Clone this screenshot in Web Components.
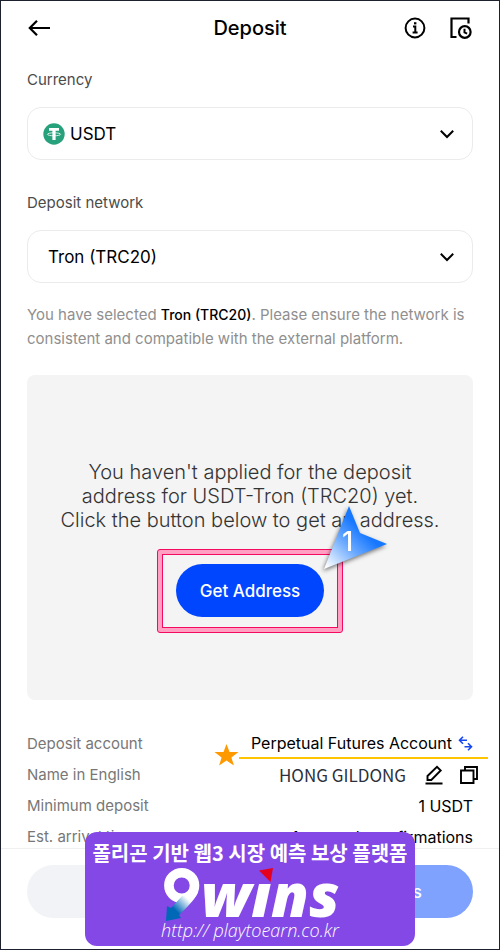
<!DOCTYPE html>
<html lang="en">
<head>
<meta charset="utf-8">
<meta name="viewport" content="width=device-width, initial-scale=1">
<title>Deposit</title>
<style>
body {
  margin: 0;
  font-family: Inter, "Noto Sans CJK KR", sans-serif;
  color: #000;
  background: #fff;
}
</style>
</head>
<body>
<deposit-page>
  <top-bar slot="header">Deposit</top-bar>
  <pick-field label="Currency" value="USDT" coin></pick-field>
  <pick-field label="Deposit network" value="Tron (TRC20)"></pick-field>
  <network-note>You have selected <b>Tron (TRC20)</b>. Please ensure the network is consistent and compatible with the external platform.</network-note>
  <address-panel>
    You haven't applied for the deposit<br>address for USDT-Tron (TRC20) yet.<br>Click the button below to get an address.
    <mark-box slot="action" step="1"><pill-button>Get Address</pill-button></mark-box>
  </address-panel>
  <deposit-details></deposit-details>
  <bottom-bar slot="footer">
    <pill-button kind="muted">Save Picture</pill-button>
    <pill-button kind="light">Copy Address</pill-button>
    <promo-banner slot="promo"></promo-banner>
  </bottom-bar>
</deposit-page>

<script>
// small helper: every component sets its own styles + markup
class BaseElement extends HTMLElement {
  constructor() {
    super();
    this.attachShadow({ mode: "open" });
  }
  connectedCallback() {
    this.shadowRoot.innerHTML = `<style>* { box-sizing: border-box; }${this.style_()}</style>${this.template()}`;
  }
}

class DepositPage extends BaseElement {
  style_() {
    return `
    :host {
      box-sizing: border-box;
      display: flex;
      flex-direction: column;
      height: 100vh;
      border: 1px solid #1d212e;
      background: #fff;
    }
    main {
      flex: 1;
      min-height: 0;
      overflow: hidden;
      padding: 0 26px;
    }`;
  }
  template() {
    return `<slot name="header"></slot><main><slot></slot></main><slot name="footer"></slot>`;
  }
}

class TopBar extends BaseElement {
  style_() {
    return `
    header {
      display: grid;
      grid-template-columns: 1fr auto 1fr;
      align-items: center;
      height: 53px;
      padding: 0 26px;
    }
    h1 { margin: 0; font-size: 20px; line-height: 24px; font-weight: 500; }
    .actions { display: flex; justify-content: flex-end; gap: 22px; }
    button { display: block; width: 24px; height: 24px; padding: 0; border: 0; background: none; color: #000; }
    svg { display: block; }`;
  }
  template() {
    return `
    <header>
      <button aria-label="Back">
        <svg width="24" height="24" viewBox="0 0 24 24" fill="none" stroke="currentColor" stroke-width="2.2"><path d="M23 12H3M10 4.8L2.8 12l7.2 7.2"/></svg>
      </button>
      <h1><slot></slot></h1>
      <div class="actions">
        <button aria-label="Info">
          <svg width="24" height="24" viewBox="0 0 24 24" fill="none" stroke="currentColor" stroke-width="2"><circle cx="12" cy="12" r="9.4"/><path d="M10 10.4h2.3v6M9.6 16.6h5"/><path d="M11 7.3h2.4" stroke-width="2.2"/></svg>
        </button>
        <button aria-label="History">
          <svg width="24" height="24" viewBox="0 0 24 24" fill="none" stroke="currentColor" stroke-width="2.2"><path d="M19.5 7.5V2.5H2.500v18.500H7.500"/><circle cx="15.800" cy="16" r="5.800"/><path d="M15.500 12.800v3.600l2.600 1.200" stroke-width="2"/></svg>
        </button>
      </div>
    </header>`;
  }
}

class PickField extends BaseElement {
  style_() {
    return `
    :host { display: block; padding-top: 16px; }
    :host + :host { padding-top: 0; }
    label { display: block; font-size: 15px; line-height: 20px; color: #4b4b4b; }
    .box { display: grid; align-items: center; margin: 17px 0; }
    .box > * { grid-area: 1 / 1; }
    select {
      appearance: none;
      width: 100%;
      height: 53px;
      padding: 0 48px 0 20px;
      border: 1px solid #ebebeb;
      border-radius: 14px;
      background: #fff;
      color: #000;
      font: inherit;
      font-size: 17px;
    }
    :host([coin]) select { padding-left: 42px; }
    svg { display: block; pointer-events: none; }
    .coin { margin-left: 16px; }
    .chevron { justify-self: end; margin-right: 18px; }`;
  }
  template() {
    const coin = this.hasAttribute("coin") ? `
      <svg class="coin" width="22" height="22" viewBox="0 0 22 22"><circle cx="11" cy="11" r="10.7" fill="#26a17b"/><path d="M6 5h10v2.800h-3.400V17H9.400V7.800H6z" fill="#fff"/><ellipse cx="11" cy="11.300" rx="6.600" ry="1.500" fill="none" stroke="#fff" stroke-width=".8"/></svg>` : "";
    return `
    <label for="pick">${this.getAttribute("label")}</label>
    <div class="box">
      <select id="pick"><option>${this.getAttribute("value")}</option></select>${coin}
      <svg class="chevron" width="16" height="16" viewBox="0 0 16 16" fill="none" stroke="#000" stroke-width="2"><path d="M1.800 4.800L8 11l6.200-6.200"/></svg>
    </div>`;
  }
}

class NetworkNote extends BaseElement {
  style_() {
    return `
    :host { display: block; margin-top: 20px; }
    p { margin: 0; font-size: 15px; line-height: 24px; color: #8f8f8f; }
    ::slotted(b) { color: #000; font-weight: 500; font-size: 14px; }`;
  }
  template() {
    return `<p><slot></slot></p>`;
  }
}

class AddressPanel extends BaseElement {
  style_() {
    return `
    :host {
      display: flex;
      flex-direction: column;
      align-items: center;
      margin-top: 24px;
      padding: 85px 16px 67px;
      border-radius: 8px;
      background: #f4f4f4;
    }
    p { margin: 0 0 17px; text-align: center; font-size: 20px; font-weight: 300; line-height: 24px; color: #333; }`;
  }
  template() {
    return `<p><slot></slot></p><slot name="action"></slot>`;
  }
}

class PillButton extends BaseElement {
  style_() {
    return `
    :host { display: block; }
    button {
      display: block;
      width: 100%;
      height: 53px;
      padding: 0 24px;
      border: 0;
      border-radius: 27px;
      background: #0046ff;
      color: #fff;
      font: inherit;
      font-size: 17px;
      font-weight: 500;
    }
    :host([kind=muted]) button { background: #f2f3f6; color: #c2c4c9; }
    :host([kind=light]) button { background: #80a2ff; }`;
  }
  template() {
    return `<button><slot></slot></button>`;
  }
}

// double pink outline with a numbered pointer on its corner
class MarkBox extends BaseElement {
  style_() {
    return `
    :host {
      display: block;
      position: relative;
      padding: 4px;
      border: 1px solid #f50a62;
      border-radius: 3px;
      background: #ff9fc2;
    }
    .inner { padding: 9px 13px 10px; border: 1px solid #f50a62; background: #f4f4f4; }
    svg { position: absolute; right: -48px; top: -47px; filter: drop-shadow(-1px 2px 2px #0008); }
    text { font: 500 27px Inter, sans-serif; fill: #fff; }`;
  }
  template() {
    return `
    <div class="inner"><slot></slot></div>
    <svg width="70" height="70" viewBox="0 0 70 70">
      <defs><linearGradient id="g" x1="6" y1="64" x2="48" y2="20" gradientUnits="userSpaceOnUse">
        <stop offset="0" stop-color="#fff"/><stop offset=".5" stop-color="#6aa9ff"/><stop offset=".85" stop-color="#1677ff"/>
      </linearGradient></defs>
      <path d="M29 3L40 30L67 41L4 66Z" fill="url(#g)"/>
      <text x="22" y="48">${this.getAttribute("step")}</text>
    </svg>`;
  }
}

class DepositDetails extends BaseElement {
  style_() {
    return `
    :host { display: block; margin-top: 27px; }
    dl { margin: 0; }
    .row { position: relative; display: flex; justify-content: space-between; align-items: center; height: 31px; }
    .row:first-child { height: 32px; }
    dt { font-size: 15px; color: #777; }
    dd { display: flex; align-items: center; margin: 0; font-size: 16px; }
    button { display: block; padding: 0; border: 0; background: none; color: #000; }
    svg { display: block; }
    .swap { margin-left: 6px; color: #1747f0; }
    .name { font-family: "Noto Sans CJK KR", sans-serif; font-size: 17px; line-height: 24px; color: #2a303c; }
    .tools { display: flex; gap: 15px; margin: 0 -6px 0 18px; }
    .underline { position: absolute; right: -15px; bottom: -8px; display: flex; align-items: center; width: 274px; pointer-events: none; }
    .underline i { flex: 1; height: 2px; margin-top: 5px; background: #ffc400; }`;
  }
  template() {
    return `
    <dl>
      <div class="row">
        <dt>Deposit account</dt>
        <dd>Perpetual Futures Account
          <button class="swap" aria-label="Switch account">
            <svg width="15" height="15" viewBox="0 0 15 15" fill="none" stroke="currentColor" stroke-width="1.600"><path d="M9 4.200H1.500M5 .7L1.500 4.200L5 7.700M6.500 10.800h7M10 7.300l3.500 3.500L10 14.300"/></svg>
          </button>
        </dd>
        <span class="underline">
          <svg width="25" height="24" viewBox="0 0 25 24"><path d="M12.500 1l3 8h9l-7.100 5.400 2.500 8.100-7.400-4.900-7.400 4.900 2.500-8.100L.5 9h9z" fill="#ff9900"/></svg>
          <i></i>
        </span>
      </div>
      <div class="row">
        <dt>Name in English</dt>
        <dd>
          <span class="name">HONG GILDONG</span>
          <span class="tools">
            <button aria-label="Edit"><svg width="20" height="20" viewBox="0 0 20 20" fill="none" stroke="currentColor" stroke-width="1.900"><path d="M3.500 15v-4L13 1.800l3.700 3.700L7.300 15zM1.500 18.500h17"/></svg></button>
            <button aria-label="Copy"><svg width="20" height="20" viewBox="0 0 20 20" fill="none" stroke="currentColor" stroke-width="1.900"><path d="M2 5.500h12.500V18H2zM6 5V2h12v12h-3"/></svg></button>
          </span>
        </dd>
      </div>
      <div class="row"><dt>Minimum deposit</dt><dd>1 USDT</dd></div>
      <div class="row"><dt>Est. arrival time</dt><dd>1 network confirmations</dd></div>
    </dl>`;
  }
}

class BottomBar extends BaseElement {
  style_() {
    return `
    footer {
      position: relative;
      display: grid;
      grid-template-columns: 1fr 1fr;
      gap: 12px;
      padding: 16px 26px 31px;
      border-top: 1px solid #f0f0f0;
      background: #fff;
    }
    .promo { position: absolute; left: 0; right: 0; bottom: 3px; display: flex; justify-content: center; }`;
  }
  template() {
    return `<footer><slot></slot><div class="promo"><slot name="promo"></slot></div></footer>`;
  }
}

class PromoBanner extends BaseElement {
  style_() {
    return `
    :host {
      box-sizing: border-box;
      display: flex;
      flex-direction: column;
      align-items: center;
      width: 330px;
      height: 114px;
      padding-top: 7px;
      border-radius: 12px;
      background: #8348e5;
      color: #fff;
    }
    strong { font: 700 20px/28px "Noto Sans CJK KR", sans-serif; white-space: nowrap; }
    svg { display: block; overflow: visible; }
    .wins { font: italic 800 61px "Open Sans", sans-serif; fill: #fff; }
    a { font: italic 300 18px/18px "Open Sans", sans-serif; color: #fff; text-decoration: none; }`;
  }
  template() {
    return `
    <strong>폴리곤 기반 웹3 시장 예측 보상 플랫폼</strong>
    <svg width="180" height="54" viewBox="0 0 180 54">
      <defs><linearGradient id="tail" x1="12" y1="46" x2="27" y2="31" gradientUnits="userSpaceOnUse">
        <stop offset=".2" stop-color="#0068b7"/><stop offset="1" stop-color="#fff"/>
      </linearGradient></defs>
      <circle cx="21.700" cy="18.500" r="12.800" fill="none" stroke="#fff" stroke-width="9.600"/>
      <path d="M22 29Q28 28 31 22L38 25Q36 32 19 48L21 51L6 54L7 39L11 41Z" fill="url(#tail)"/>
      <text class="wins" x="41" y="50">wins</text>
      <path d="M94 -2h26v18H94z" fill="#8348e5"/>
      <path d="M99 3.500L113 1L110.500 15Z" fill="#e60020"/>
    </svg>
    <a href="http://playtoearn.co.kr">http:// playtoearn.co.kr</a>`;
  }
}

customElements.define("deposit-page", DepositPage);
customElements.define("top-bar", TopBar);
customElements.define("pick-field", PickField);
customElements.define("network-note", NetworkNote);
customElements.define("address-panel", AddressPanel);
customElements.define("pill-button", PillButton);
customElements.define("mark-box", MarkBox);
customElements.define("deposit-details", DepositDetails);
customElements.define("bottom-bar", BottomBar);
customElements.define("promo-banner", PromoBanner);
</script>
</body>
</html>
